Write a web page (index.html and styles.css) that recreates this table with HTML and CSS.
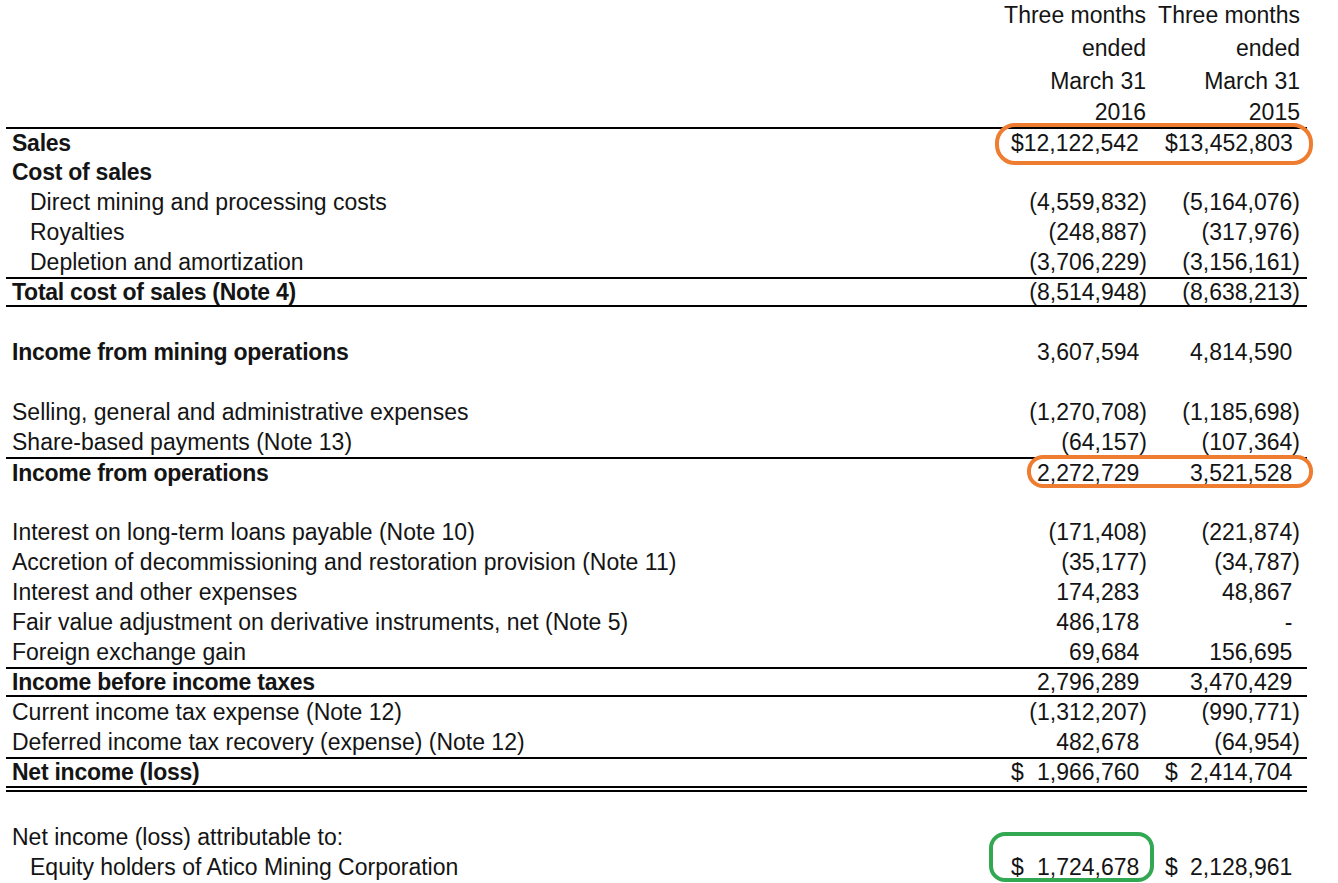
FILE: index.html
```html
<!DOCTYPE html>
<html>
<head>
<meta charset="utf-8">
<link rel="stylesheet" href="styles.css">
</head>
<body>
<div class="sheet">
  <div class="head">
    <div class="hrow h1"><div></div><div class="hc">Three months</div><div class="hc">Three months</div></div>
    <div class="hrow h2"><div></div><div class="hc">ended</div><div class="hc">ended</div></div>
    <div class="hrow h3"><div></div><div class="hc">March 31</div><div class="hc">March 31</div></div>
    <div class="hrow h4"><div></div><div class="hc">2016</div><div class="hc">2015</div></div>
  </div>

  <div class="row bold top"><div class="label">Sales</div><div class="c cur"><span>$12,122,542</span><span class="pos"></span></div><div class="c cur"><span>$13,452,803</span><span class="pos"></span></div></div>
  <div class="row bold"><div class="label">Cost of sales</div><div class="c"></div><div class="c"></div></div>
  <div class="row"><div class="label ind">Direct mining and processing costs</div><div class="c">(4,559,832)</div><div class="c">(5,164,076)</div></div>
  <div class="row"><div class="label ind">Royalties</div><div class="c">(248,887)</div><div class="c">(317,976)</div></div>
  <div class="row"><div class="label ind">Depletion and amortization</div><div class="c">(3,706,229)</div><div class="c">(3,156,161)</div></div>
  <div class="row bold top bottom"><div class="label">Total cost of sales (Note 4)</div><div class="c">(8,514,948)</div><div class="c">(8,638,213)</div></div>
  <div class="row"><div class="label"></div></div>
  <div class="row bold"><div class="label">Income from mining operations</div><div class="c"><span class="pos">3,607,594</span></div><div class="c"><span class="pos">4,814,590</span></div></div>
  <div class="row"><div class="label"></div></div>
  <div class="row"><div class="label">Selling, general and administrative expenses</div><div class="c">(1,270,708)</div><div class="c">(1,185,698)</div></div>
  <div class="row"><div class="label">Share-based payments (Note 13)</div><div class="c">(64,157)</div><div class="c">(107,364)</div></div>
  <div class="row bold top"><div class="label">Income from operations</div><div class="c"><span class="pos">2,272,729</span></div><div class="c"><span class="pos">3,521,528</span></div></div>
  <div class="row"><div class="label"></div></div>
  <div class="row"><div class="label">Interest on long-term loans payable (Note 10)</div><div class="c">(171,408)</div><div class="c">(221,874)</div></div>
  <div class="row"><div class="label">Accretion of decommissioning and restoration provision (Note 11)</div><div class="c">(35,177)</div><div class="c">(34,787)</div></div>
  <div class="row"><div class="label">Interest and other expenses</div><div class="c"><span class="pos">174,283</span></div><div class="c"><span class="pos">48,867</span></div></div>
  <div class="row"><div class="label">Fair value adjustment on derivative instruments, net (Note 5)</div><div class="c"><span class="pos">486,178</span></div><div class="c"><span class="pos">-</span></div></div>
  <div class="row"><div class="label">Foreign exchange gain</div><div class="c"><span class="pos">69,684</span></div><div class="c"><span class="pos">156,695</span></div></div>
  <div class="row bold top bottom"><div class="label">Income before income taxes</div><div class="c"><span class="pos">2,796,289</span></div><div class="c"><span class="pos">3,470,429</span></div></div>
  <div class="row"><div class="label">Current income tax expense (Note 12)</div><div class="c">(1,312,207)</div><div class="c">(990,771)</div></div>
  <div class="row"><div class="label">Deferred income tax recovery (expense) (Note 12)</div><div class="c"><span class="pos">482,678</span></div><div class="c">(64,954)</div></div>
  <div class="row bold top dbl"><div class="label">Net income (loss)</div><div class="c cur"><span>$</span><span class="pos">1,966,760</span></div><div class="c cur"><span>$</span><span class="pos">2,414,704</span></div></div>
  <div class="row gap"><div class="label"></div></div>
  <div class="row"><div class="label">Net income (loss) attributable to:</div><div class="c"></div><div class="c"></div></div>
  <div class="row"><div class="label ind">Equity holders of Atico Mining Corporation</div><div class="c cur"><span>$</span><span class="pos">1,724,678</span></div><div class="c cur"><span>$</span><span class="pos">2,128,961</span></div></div>

  <div class="mark orange m1"></div>
  <div class="mark orange m2"></div>
  <div class="mark green m3"></div>
</div>
</body>
</html>
```

FILE: styles.css
```css
html, body {
  margin: 0;
  padding: 0;
  background: #ffffff;
}

body {
  font-family: "Liberation Sans", Arial, sans-serif;
  font-size: 23px;
  color: #141414;
  overflow: hidden;
}

.sheet {
  position: relative;
  margin-left: 6px;
  width: 1301px;
}

.head {
  height: 127px;
}

.hrow {
  display: grid;
  grid-template-columns: 1fr 154px 154px;
  align-items: center;
}

.h1 { height: 31px; }
.h2 { height: 34px; }
.h3 { height: 33px; }
.h4 { height: 29px; }

.hc {
  text-align: right;
  padding-right: 7px;
  white-space: nowrap;
}

.row {
  display: grid;
  grid-template-columns: 1fr 154px 154px;
  align-items: center;
  height: 30px;
  box-sizing: border-box;
  line-height: 1;
}

.row.top { border-top: 2px solid #000; }
.row.bottom { border-bottom: 2px solid #000; }
.row.dbl {
  height: 35px;
  border-bottom: 6px double #000;
}
.row.gap { height: 30px; }

.bold .label {
  font-weight: bold;
  letter-spacing: -0.25px;
}

.label {
  padding-left: 6px;
  white-space: nowrap;
}

.label.ind { padding-left: 24px; }

.c {
  text-align: right;
  padding-right: 6px;
  white-space: nowrap;
}

.c + .c { padding-right: 7px; }

.c.cur {
  display: flex;
  justify-content: space-between;
  padding-left: 12px;
}

.pos::after {
  content: ")";
  visibility: hidden;
}

.mark {
  position: absolute;
  box-sizing: border-box;
  border-style: solid;
  border-width: 4px;
}

.orange { border-color: #ee7d31; }
.green { border-color: #33a852; }

.m1 {
  left: 989px;
  top: 123px;
  width: 318px;
  height: 42px;
  border-radius: 20px;
}

.m2 {
  left: 1021px;
  top: 455px;
  width: 286px;
  height: 33px;
  border-radius: 16px;
}

.m3 {
  left: 983px;
  top: 832px;
  width: 165px;
  height: 50px;
  border-radius: 16px;
}
```
